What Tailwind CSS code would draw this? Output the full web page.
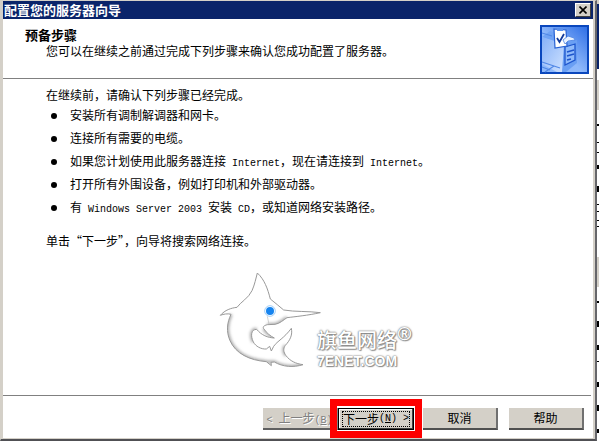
<!DOCTYPE html>
<html lang="zh-CN">
<head>
    <meta charset="UTF-8">
    <meta name="viewport" content="width=device-width, initial-scale=1.0">
    <title>配置您的服务器向导</title>
    <script src="https://cdn.jsdelivr.net/npm/@tailwindcss/browser@4"></script>
</head>
<body class="flex min-h-screen bg-white pb-px font-['Noto_Sans_CJK_SC',sans-serif] text-[12px] leading-[16px] text-black overflow-hidden">
    <main class="flex flex-1 flex-col border-t border-l border-t-[#d4d0c8] border-l-[#d4d0c8] border-r-2 border-b-2 border-r-[#66666a] border-b-[#505054]">
        <div class="flex flex-1 flex-col border-l-2 border-r-2 border-b border-[#d4d0c8]">
            <!-- Barre de titre -->
            <div class="flex h-[18px] items-center justify-between bg-[#0a246a] pl-px pr-[2px]">
                <h1 class="text-[13px] leading-[18px] font-bold text-white">配置您的服务器向导</h1>
                <button type="button" aria-label="关闭" class="flex h-[14px] w-[16px] items-center justify-center border border-t-white border-l-white border-r-[#404040] border-b-[#404040] bg-[#d4d0c8]">
                    <svg class="h-[8px] w-[8px]" viewBox="0 0 8 8" fill="none" stroke="#000" stroke-width="1.6"><path d="M0.5 0.5L7.5 7.5M7.5 0.5L0.5 7.5"/></svg>
                </button>
            </div>

            <header class="flex h-[60px] items-start justify-between border-b border-[#808080] pl-[22px] pr-[4px] pt-[6px]">
                <div class="pt-[2px]">
                    <h2 class="text-[13px] leading-[16px] font-bold">预备步骤</h2>
                    <p class="pl-[21px] leading-[15px]">您可以在继续之前通过完成下列步骤来确认您成功配置了服务器。</p>
                </div>
                <svg class="h-[49px] w-[49px]" viewBox="0 0 49 49" fill="none">
                    <defs>
                        <linearGradient id="sky" x1="0" y1="1" x2="1" y2="0">
                            <stop offset="0" stop-color="#8db8fb"/>
                            <stop offset="0.45" stop-color="#8fb9fb"/>
                            <stop offset="1" stop-color="#2f6fe6"/>
                        </linearGradient>
                        <linearGradient id="side" x1="0" y1="0" x2="1" y2="1">
                            <stop offset="0" stop-color="#86b1f8"/>
                            <stop offset="1" stop-color="#cfe2ff"/>
                        </linearGradient>
                    </defs>
                    <rect width="49" height="49" fill="#0a47bd"/>
                    <rect x="2" y="2" width="45" height="45" fill="url(#sky)"/>
                    <path d="M2 12L10 6L36 15L24 20Z" fill="#6fa3f5"/>
                    <path d="M2 12L24 19V47H17L2 39Z" fill="url(#side)"/>
                    <path d="M24 19L37 15V38L26 47H22Z" fill="#6a9ff3"/>
                    <path d="M2 8L12 11M2 37L20 43M5 47L14 41M2 42L10 45" stroke="#5188e6" stroke-width="1.2"/>
                    <path d="M25 22L35 19V35L25 40Z" fill="#8fbafa" stroke="#1d55cc" stroke-width="1.3"/>
                    <path d="M27 27L34 25M27 31L34 29M27 35L31 34" stroke="#1d55cc" stroke-width="1.5"/>
                    <path d="M14 4L26 5L27 21L15 23Z" fill="#fff" stroke="#2761d3" stroke-width="1.2"/>
                    <path d="M17 3H23V6H17Z" fill="#5b91ec"/>
                    <path d="M17 13L19.500 17L24 9" stroke="#143c9b" stroke-width="1.8"/>
                    <path d="M23 15L28 11L34 13L35 15L28 16L25 19Z" fill="#e8f2ff" stroke="#4b83e2" stroke-width="0.8"/>
                </svg>
            </header>

            <section class="flex-1 pl-[43px] pt-[8px]">
                <p>在继续前，请确认下列步骤已经完成。</p>
                <ul class="pl-[5px]">
                    <li class="flex h-[23px] items-center gap-[13px]"><span class="mt-[3px] h-[6px] w-[6px] rounded-full bg-black"></span><span>安装所有调制解调器和网卡。</span></li>
                    <li class="flex h-[23px] items-center gap-[13px]"><span class="mt-[3px] h-[6px] w-[6px] rounded-full bg-black"></span><span>连接所有需要的电缆。</span></li>
                    <li class="flex h-[23px] items-center gap-[13px]"><span class="mt-[3px] h-[6px] w-[6px] rounded-full bg-black"></span><span>如果您计划使用此服务器连接<span class="font-['Liberation_Mono',monospace] text-[10px] leading-none"> Internet</span>，现在请连接到<span class="font-['Liberation_Mono',monospace] text-[10px] leading-none"> Internet</span>。</span></li>
                    <li class="flex h-[23px] items-center gap-[13px]"><span class="mt-[3px] h-[6px] w-[6px] rounded-full bg-black"></span><span>打开所有外围设备，例如打印机和外部驱动器。</span></li>
                    <li class="flex h-[23px] items-center gap-[13px]"><span class="mt-[3px] h-[6px] w-[6px] rounded-full bg-black"></span><span>有<span class="font-['Liberation_Mono',monospace] text-[10px] leading-none"> Windows Server 2003 </span>安装<span class="font-['Liberation_Mono',monospace] text-[10px] leading-none"> CD</span>，或知道网络安装路径。</span></li>
                </ul>
                <p class="pt-[15px]">单击“下一步”，向导将搜索网络连接。</p>

                <!-- Logo -->
                <div class="flex items-start pl-[169px] pt-[19px]">
                    <svg class="h-[107px] w-[110px] shrink-0" viewBox="0 0 330 321" fill="none">
                        <defs>
                            <filter id="soft" x="-10%" y="-10%" width="120%" height="120%"><feGaussianBlur stdDeviation="4"/></filter>
                            <clipPath id="body-clip"><path d="M127 15C148 34 158 62 166 93C180 104 194 116 206 126C240 132 280 129 316 134C280 142 240 146 216 149C205 156 194 167 180 169L157 170C146 173 143 176 146 182C156 196 166 204 178 210C158 209 140 202 125 184C108 184 106 203 115 222C122 235 138 244 154 243L176 235C188 218 198 206 229 181C233 200 226 216 211 232C204 242 205 252 213 263C225 279 242 287 264 290C235 299 204 297 178 282L168 283L169 293L154 281C104 277 62 257 45 218C33 190 36 164 48 139C38 136 26 138 16 142C30 126 48 120 66 118C76 103 101 90 111 68C119 50 123 30 127 15Z"/></clipPath>
                        </defs>
                        <g clip-path="url(#body-clip)">
                            <path d="M48 139C36 164 33 190 45 218C62 257 104 277 154 281L178 282C204 297 235 299 264 290M216 149C205 156 194 167 180 169L157 170M146 182C156 196 166 204 178 210M125 184C108 184 106 203 115 222M211 232C204 242 205 252 213 263" stroke="#a5a5a5" stroke-width="9" filter="url(#soft)"/>
                        </g>
                        <path d="M127 15C148 34 158 62 166 93C180 104 194 116 206 126C240 132 280 129 316 134C280 142 240 146 216 149C205 156 194 167 180 169L157 170C146 173 143 176 146 182C156 196 166 204 178 210C158 209 140 202 125 184C108 184 106 203 115 222C122 235 138 244 154 243L164 235L169 249L176 235C188 218 206 212 229 181C233 200 226 216 211 232C204 242 205 252 213 263C225 279 242 287 264 290C235 299 204 297 178 282L168 283L169 293L154 281C104 277 62 257 45 218C33 190 36 164 48 139C38 136 26 138 16 142C30 126 48 120 66 118C76 103 101 90 111 68C119 50 123 30 127 15Z" stroke="#999" stroke-width="3" stroke-linejoin="round"/>
                        <path d="M157 145L162 169" stroke="#bbb" stroke-width="2"/>
                        <circle cx="165" cy="129" r="16" fill="#fff" stroke="#75b7f3" stroke-width="2"/>
                        <circle cx="165" cy="129" r="12" fill="#1684ef"/>
                    </svg>
                    <div class="-ml-[8px] pt-[58px] text-white [text-shadow:0_0_2px_#666,0_0_1px_#888,1px_1px_1px_#999]">
                        <div class="flex items-start">
                            <span class="text-[20px] leading-[28px] font-medium">旗鱼网络</span>
                            <span class="-mt-[5px] font-['Open_Sans',sans-serif] text-[18px] leading-[24px] font-bold">®</span>
                        </div>
                        <p class="font-['Liberation_Sans',sans-serif] text-[14px] leading-[14px] font-bold">7ENET.COM</p>
                    </div>
                </div>
            </section>

            <footer class="mr-[2px] flex h-[43px] items-start justify-end border-t border-[#808080] pr-[7px] pt-[12px]">
                <button type="button" disabled class="h-[22px] w-[75px] whitespace-nowrap border-r-2 border-b-2 border-r-[#808080] border-b-[#606060] bg-[#d4d0c8] text-[#808080] [text-shadow:1px_1px_0_#fff]"><span class="font-['Liberation_Mono',monospace] text-[10px] leading-none">&lt; </span>上一步<span class="font-['Liberation_Mono',monospace] text-[10px] leading-none">(<u>B</u>)</span></button>
                <div class="relative">
                    <button type="button" class="h-[22px] w-[76px] border border-black bg-[#d4d0c8] p-px shadow-[inset_-1px_-1px_0_#404040,inset_1px_1px_0_#fff]"><span class="mx-auto flex h-[16px] w-[68px] items-center justify-center border border-dotted border-black whitespace-pre">下一步<span class="font-['Liberation_Mono',monospace] text-[10px] leading-none">(<u>N</u>) &gt;</span></span></button>
                    <div class="pointer-events-none absolute -top-[9px] -right-[8px] -bottom-[8px] -left-[8px] border-[7px] border-[#fe0000]"></div>
                </div>
                <button type="button" class="ml-[9px] h-[22px] w-[75px] border-r-2 border-b-2 border-r-[#707070] border-b-[#505050] bg-[#d4d0c8]">取消</button>
                <button type="button" class="ml-[11px] h-[22px] w-[75px] border-r-2 border-b-2 border-r-[#707070] border-b-[#505050] bg-[#d4d0c8]">帮助</button>
            </footer>
        </div>
    </main>

    <!-- Fenêtre derrière -->
    <div class="flex w-[2px] flex-col bg-white">
        <div class="h-[4px] bg-[#d4d0c8]"></div>
        <div class="h-[65px] bg-[#0a246a]"></div>
        <div class="mt-[11px] h-[30px] bg-[#d4d0c8]"></div>
        <div class="mt-[14px] h-[2px] bg-black"></div>
        <div class="mt-[16px] h-px bg-black"></div>
        <div class="mt-[9px] h-px bg-black"></div>
        <div class="mt-[12px] h-[4px] bg-black"></div>
        <div class="mt-[17px] h-[6px] bg-black"></div>
        <div class="mt-[12px] h-px bg-black"></div>
        <div class="mt-[6px] h-px bg-black"></div>
        <div class="mt-[8px] h-px bg-black"></div>
        <div class="mt-[5px] h-px bg-black"></div>
        <div class="mt-[30px] h-[30px] bg-[#d4d0c8]"></div>
        <div class="mt-[14px] h-[2px] bg-black"></div>
        <div class="mt-[18px] h-[6px] bg-black"></div>
        <div class="mt-[18px] h-[5px] bg-black"></div>
        <div class="mt-[11px] h-px bg-black"></div>
        <div class="mt-[20px] h-[5px] bg-black"></div>
        <div class="mt-[18px] h-[6px] bg-black"></div>
        <div class="mt-[18px] h-[4px] bg-black"></div>
    </div>
</body>
</html>
